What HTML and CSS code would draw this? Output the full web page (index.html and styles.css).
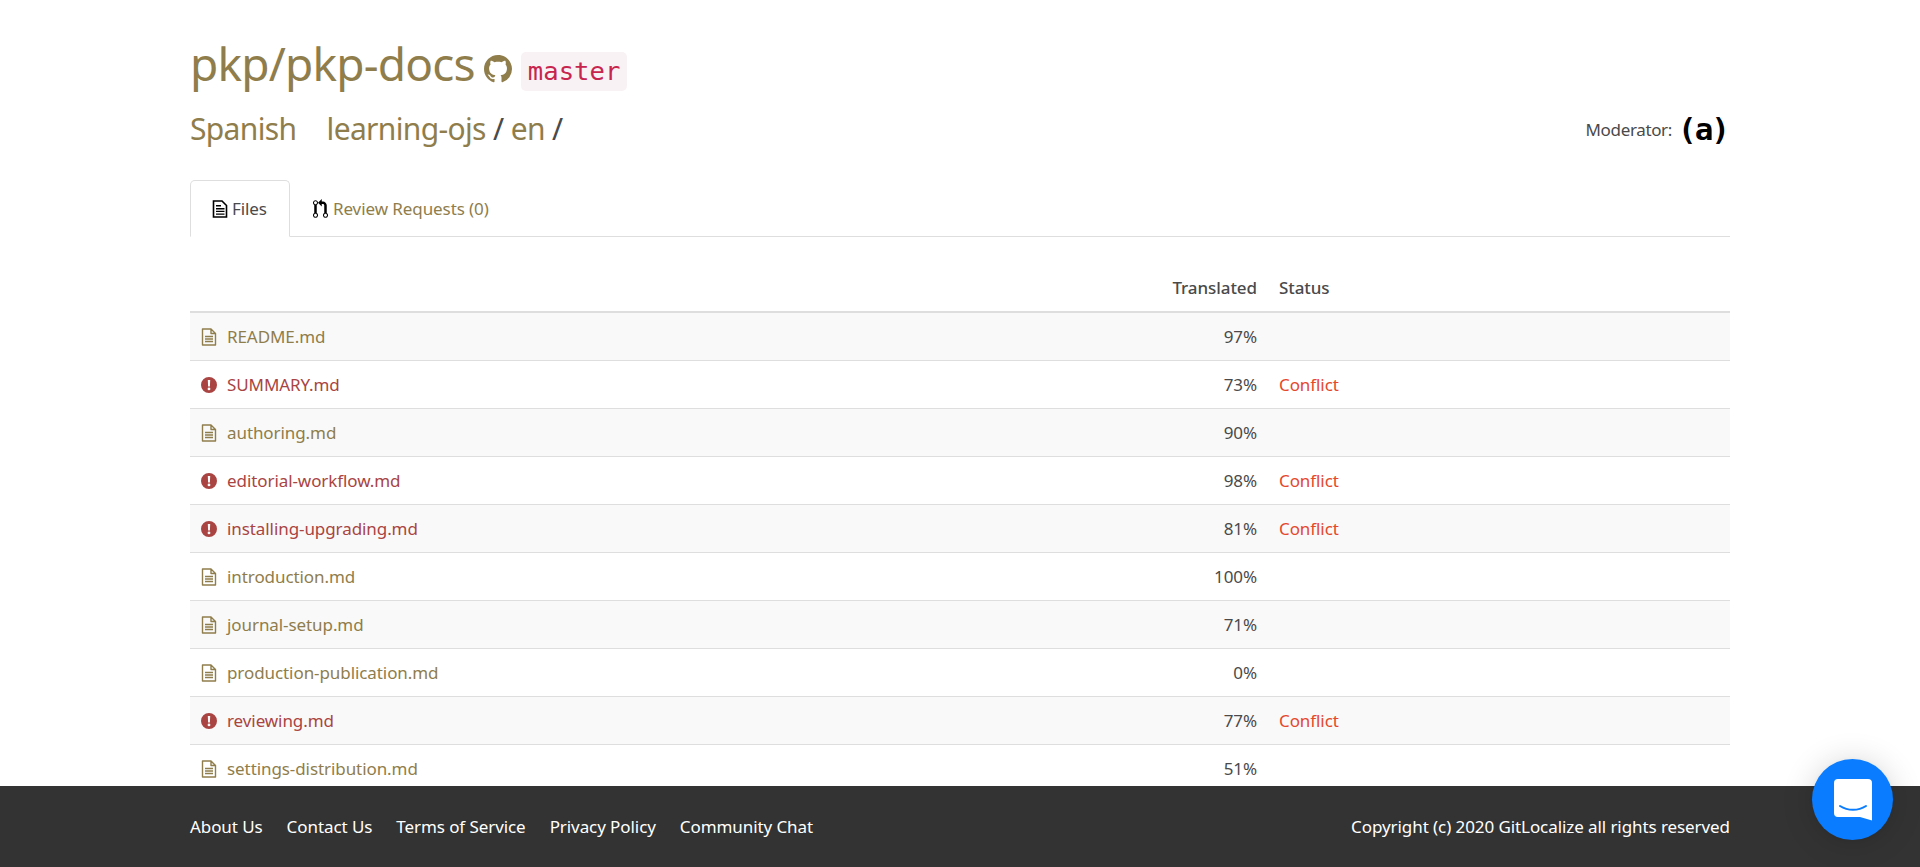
FILE: index.html
```html
<!DOCTYPE html>
<html lang="en">
<head>
  <meta charset="UTF-8" />
  <title>pkp/pkp-docs</title>
  <link rel="stylesheet" href="styles.css">
</head>
<body>
  <svg class="defs" width="0" height="0">
    <symbol id="file" viewBox="0 0 16 18">
      <path d="M1.500 1h8.500l4.500 4.500v11.500h-13z M10 1v4.500h4.500 M4 8.500h8 M4 11h8 M4 13.500h8" fill="none" stroke="currentColor" stroke-width="1.400" stroke-linejoin="round"/>
    </symbol>
    <symbol id="alert" viewBox="0 0 16 16">
      <path fill-rule="evenodd" d="M8 0a8 8 0 1 0 0 16A8 8 0 0 0 8 0z M6.800 3h2.400l-.300 6.500h-1.800z M8 10.500a1.400 1.400 0 1 1 0 2.800 1.400 1.400 0 0 1 0-2.800z" fill="currentColor"/>
    </symbol>
  </svg>

  <main class="content">
    <h1 class="repo">
      <a href="#">pkp/pkp-docs</a>
      <svg class="gh" viewBox="0 0 16 16"><path fill="currentColor" d="M8 0C3.580 0 0 3.580 0 8c0 3.540 2.290 6.530 5.470 7.590.4.070.55-.17.55-.38 0-.19-.01-.82-.01-1.490-2.010.37-2.530-.49-2.690-.94-.09-.23-.48-.94-.82-1.130-.28-.15-.68-.52-.01-.53.63-.01 1.080.58 1.230.82.72 1.210 1.870.87 2.330.66.070-.52.28-.87.51-1.070-1.780-.2-3.640-.89-3.640-3.950 0-.87.31-1.590.82-2.150-.08-.2-.36-1.020.08-2.120 0 0 .67-.21 2.200.82.64-.18 1.320-.27 2-.27.68 0 1.360.09 2 .27 1.530-1.040 2.200-.82 2.200-.82.44 1.100.16 1.920.08 2.120.51.56.82 1.270.82 2.150 0 3.070-1.870 3.750-3.650 3.950.29.25.54.73.54 1.480 0 1.070-.01 1.930-.01 2.200 0 .21.15.46.55.38A8.013 8.013 0 0 0 16 8c0-4.420-3.580-8-8-8z"/></svg>
      <code class="branch">master</code>
    </h1>

    <div class="crumbs">
      <div class="path">
        <a href="#" class="lang">Spanish</a>
        <a href="#">learning-ojs</a> / <a href="#">en</a> /
      </div>
      <div class="moderator">Moderator: <span class="avatar">(a)</span></div>
    </div>

    <nav class="tabs">
      <a href="#" class="tab active">
        <svg class="tab-icon" viewBox="0 0 16 18"><path d="M1.500 1h8.500l4.500 4.500v11.500h-13z" fill="none" stroke="currentColor" stroke-width="1.600"/><path d="M4 5h5v1.400h-5z M4 8h8.500v1.400h-8.500z M4 10.700h8.500v1.400h-8.500z M4 13.400h8.500v1.400h-8.500z" fill="currentColor"/></svg>
        Files
      </a>
      <a href="#" class="tab">
        <svg class="tab-icon pr" viewBox="0 0 12 16"><path fill="currentColor" d="M11 11.280V5c-.03-.78-.34-1.470-.94-2.060C9.460 2.350 8.780 2.030 8 2H7V0L4 3l3 3V4h1c.27.020.48.11.69.31.21.2.3.42.31.69v6.280A1.993 1.993 0 0 0 10 15a1.993 1.993 0 0 0 1-3.720zm-1 2.920c-.66 0-1.200-.55-1.200-1.200 0-.65.55-1.200 1.200-1.200.65 0 1.200.55 1.200 1.200 0 .65-.55 1.200-1.200 1.200zM4 3c0-1.110-.89-2-2-2a1.993 1.993 0 0 0-1 3.720v6.560A1.993 1.993 0 0 0 2 15a1.993 1.993 0 0 0 1-3.720V4.720c.59-.34 1-.98 1-1.720zm-.8 10c0 .66-.55 1.200-1.200 1.200-.65 0-1.200-.55-1.200-1.200 0-.65.55-1.200 1.200-1.200.65 0 1.200.55 1.200 1.200zM2 4.200C1.340 4.200.8 3.650.8 3c0-.65.55-1.200 1.200-1.200.65 0 1.200.55 1.200 1.200 0 .65-.55 1.200-1.200 1.200z"/></svg>
        Review Requests (0)
      </a>
    </nav>

    <table class="files">
      <thead>
        <tr><th></th><th class="num">Translated</th><th class="status">Status</th></tr>
      </thead>
      <tbody>
        <tr><td><a href="#"><svg class="ic"><use href="#file"/></svg>README.md</a></td><td class="num">97%</td><td class="status"></td></tr>
        <tr class="bad"><td><a href="#"><svg class="ic"><use href="#alert"/></svg>SUMMARY.md</a></td><td class="num">73%</td><td class="status">Conflict</td></tr>
        <tr><td><a href="#"><svg class="ic"><use href="#file"/></svg>authoring.md</a></td><td class="num">90%</td><td class="status"></td></tr>
        <tr class="bad"><td><a href="#"><svg class="ic"><use href="#alert"/></svg>editorial-workflow.md</a></td><td class="num">98%</td><td class="status">Conflict</td></tr>
        <tr class="bad"><td><a href="#"><svg class="ic"><use href="#alert"/></svg>installing-upgrading.md</a></td><td class="num">81%</td><td class="status">Conflict</td></tr>
        <tr><td><a href="#"><svg class="ic"><use href="#file"/></svg>introduction.md</a></td><td class="num">100%</td><td class="status"></td></tr>
        <tr><td><a href="#"><svg class="ic"><use href="#file"/></svg>journal-setup.md</a></td><td class="num">71%</td><td class="status"></td></tr>
        <tr><td><a href="#"><svg class="ic"><use href="#file"/></svg>production-publication.md</a></td><td class="num">0%</td><td class="status"></td></tr>
        <tr class="bad"><td><a href="#"><svg class="ic"><use href="#alert"/></svg>reviewing.md</a></td><td class="num">77%</td><td class="status">Conflict</td></tr>
        <tr><td><a href="#"><svg class="ic"><use href="#file"/></svg>settings-distribution.md</a></td><td class="num">51%</td><td class="status"></td></tr>
      </tbody>
    </table>
  </main>

  <footer class="footer">
    <div class="footer-links">
      <a href="#">About Us</a>
      <a href="#">Contact Us</a>
      <a href="#">Terms of Service</a>
      <a href="#">Privacy Policy</a>
      <a href="#">Community Chat</a>
    </div>
    <div>Copyright (c) 2020 GitLocalize all rights reserved</div>
  </footer>

  <button class="chat">
    <svg viewBox="0 0 38 42" width="38" height="42"><path fill="#fff" d="M4 0h30a4 4 0 0 1 4 4v37.500l-12-3.500h-22a4 4 0 0 1-4-4v-30a4 4 0 0 1 4-4z"/><path d="M6 27c8 5 18 5 26 0" fill="none" stroke="#0a7cff" stroke-width="2" stroke-linecap="round"/></svg>
  </button>
</body>
</html>
```

FILE: styles.css
```css
:root {
  --link: #8f7d4b;
  --text: #4a4a4a;
  --line: #dedede;
  --danger: #a94442;
}

html, body {
  height: 100%;
}

body {
  margin: 0;
  display: flex;
  flex-direction: column;
  overflow: hidden;
  font-family: "Noto Sans", sans-serif;
  font-size: 17px;
  letter-spacing: -0.08px;
  color: var(--text);
  background-color: #fff;
}

a {
  color: var(--link);
  text-decoration: none;
}

.defs {
  position: absolute;
}

.content {
  flex: 1;
  min-height: 0;
  overflow: hidden;
  width: 1540px;
  margin: 0 auto;
}

.repo {
  display: flex;
  align-items: center;
  margin: 29px 0 0 0;
  height: 68px;
  font-size: 46px;
  font-weight: 400;
  letter-spacing: -0.8px;
}

.gh {
  width: 28px;
  height: 28px;
  margin: 12px 9px 0 9px;
  color: var(--link);
}

.branch {
  display: inline-block;
  height: 39px;
  line-height: 39px;
  margin-top: 16px;
  padding: 0 7px;
  border-radius: 5px;
  background-color: #f9f2f4;
  color: #c7254e;
  font-family: "DejaVu Sans Mono", monospace;
  font-size: 25.6px;
  letter-spacing: 0;
}

.crumbs {
  display: flex;
  justify-content: space-between;
  align-items: center;
  height: 44px;
  margin-top: 9px;
}

.path {
  font-size: 30px;
  letter-spacing: -0.65px;
}

.lang {
  margin-right: 23px;
}

.moderator {
  display: flex;
  align-items: center;
  gap: 6px;
  margin-top: 2px;
  padding-right: 2px;
  letter-spacing: -0.35px;
}

.avatar {
  font-family: "DejaVu Sans Mono", monospace;
  font-size: 31px;
  font-weight: bold;
  letter-spacing: -2px;
  color: #000;
}

.tabs {
  display: flex;
  margin-top: 30px;
  border-bottom: 1px solid var(--line);
}

.tab {
  display: flex;
  align-items: center;
  height: 55px;
  padding: 0 21px;
  margin-bottom: -1px;
  border: 1px solid transparent;
  border-radius: 5px 5px 0 0;
}

.tab.active {
  padding-right: 22px;
  color: var(--text);
  background-color: #fff;
  border-color: var(--line) var(--line) #fff;
}

.tab-icon {
  width: 16px;
  height: 18px;
  margin-right: 4px;
  color: #000;
}

.tab-icon.pr {
  height: 20px;
  width: 15px;
  margin-left: 1px;
  margin-right: 5px;
}

.files {
  width: 100%;
  margin-top: 20px;
  border-collapse: collapse;
}

.files th {
  height: 55px;
  padding: 0 11px 12px;
  box-sizing: border-box;
  vertical-align: bottom;
  font-weight: 500;
  text-align: left;
  border-bottom: 2px solid var(--line);
}

.files td {
  height: 47px;
  padding: 0 11px;
  border-bottom: 1px solid var(--line);
}

.files tbody tr:nth-child(odd) {
  background-color: #f9f9f9;
}

.files th.num, .files td.num {
  text-align: right;
}

.files .status {
  width: 440px;
  color: #e5482a;
}

.files th.status {
  color: var(--text);
}

.bad a {
  color: var(--danger);
}

.ic {
  width: 16px;
  height: 18px;
  margin-right: 10px;
  vertical-align: -3px;
}

.footer {
  flex: none;
  display: flex;
  justify-content: space-between;
  align-items: center;
  height: 81px;
  padding: 0 190px;
  background-color: #333;
  color: #fff;
}

.footer a {
  color: #fff;
}

.footer-links {
  display: flex;
  gap: 24px;
}

.chat {
  position: fixed;
  right: 27px;
  bottom: 27px;
  display: flex;
  align-items: center;
  justify-content: center;
  width: 81px;
  height: 81px;
  padding: 0;
  border: none;
  border-radius: 50%;
  background-color: #0a7cff;
  box-shadow: 0 1px 6px rgba(0,0,0,.06), 0 2px 32px rgba(0,0,0,.16);
}
```
